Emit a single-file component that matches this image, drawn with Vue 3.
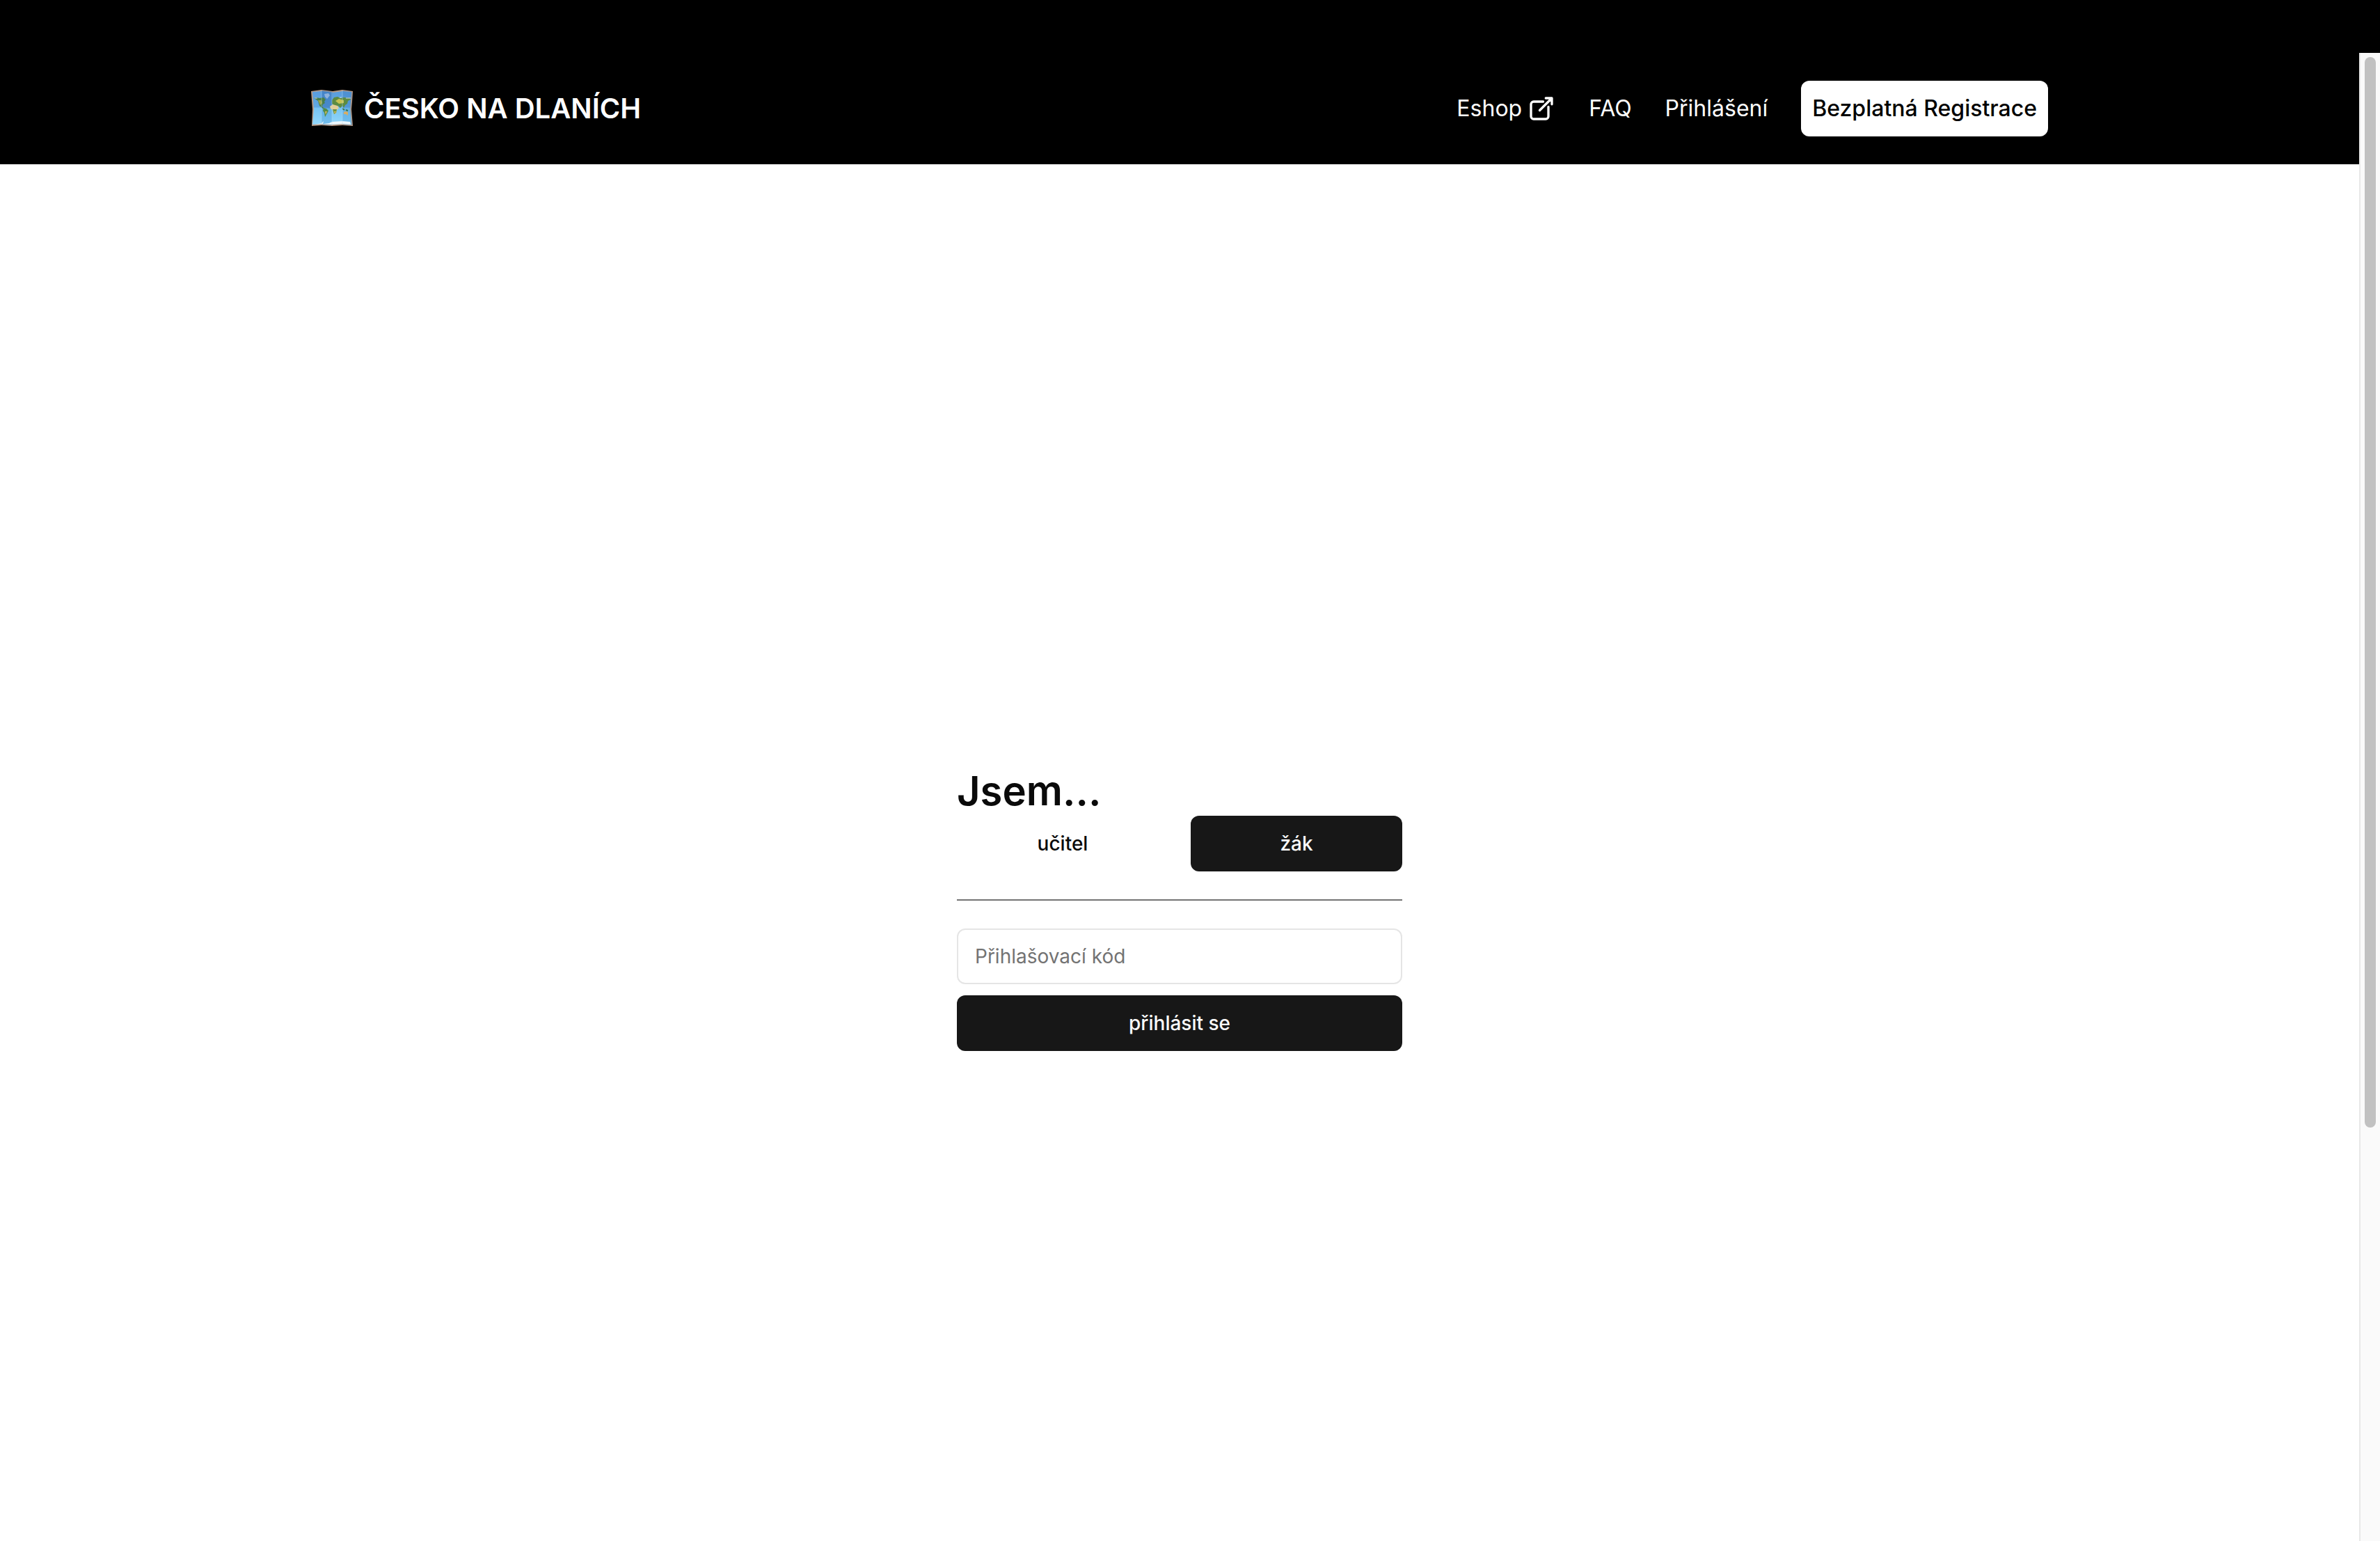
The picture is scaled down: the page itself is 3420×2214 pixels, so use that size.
<script setup>
import { ref } from 'vue'

const roles = ['učitel', 'žák']
const role = ref('žák')
const code = ref('')
</script>

<template>
  <div class="window">
    <div class="titlebar"></div>
    <div class="viewport">
      <div class="page">
        <header class="header">
          <div class="container">
            <a class="brand" href="#">
              <svg class="map" viewBox="0 0 60 60" aria-hidden="true">
                <defs>
                  <linearGradient id="sea" x1="0" y1="0" x2="0" y2="1">
                    <stop offset="0" stop-color="#5a9ddd" />
                    <stop offset="0.48" stop-color="#5fa8e4" />
                    <stop offset="0.5" stop-color="#76c3f3" />
                    <stop offset="1" stop-color="#92d7fa" />
                  </linearGradient>
                </defs>
                <path d="M0 5 15 3 31 5 45 3 60 5 59 20 58 31 60 55 45 54 30 55 15 54 1 55 2 31Z" fill="#b79a86" />
                <path d="M2 6 15 5 31 7 45 5 58 6 57 20 56 31 58 53 45 52 30 53 15 52 2 53 4 31Z" fill="url(#sea)" />
                <path d="M15 4 31 6 30 30 15 29Z" fill="#3a78bd" opacity=".65" />
                <path d="M45 4 59 6 57 30 45 29Z" fill="#3a78bd" opacity=".35" />
                <path d="M15 29 30 30 30 54 15 53ZM45 29 57 30 59 54 45 53Z" fill="#3b8fd0" opacity=".35" />
                <path d="M4 15 8 14 12 15 18 14 21 17 19 20 20 22 17 24 16 27 19 30 17 30 12 26 10 19 7 17Z" fill="#497f4a" />
                <path d="M10 18 15 18 16 22 13 25Z" fill="#9ba54b" />
                <path d="M19 9 25 8 27 11 23 16 20 13Z" fill="#8fb2dc" />
                <path d="M18 29 22 30 25 33 23 37 20 42 19 36 17 33Z" fill="#518c48" />
                <path d="M20 34 23 34 21 39Z" fill="#d0b75c" />
                <path d="M30 18 33 14 38 13 42 15 47 14 56 15 57 17 53 19 52 23 49 25 47 29 45 26 42 29 39 26 35 27 30 23Z" fill="#5c8b43" />
                <path d="M35 19 40 16 47 18 47 22 40 23Z" fill="#c6c251" />
                <path d="M27 27 31 24 38 26 40 29 37 32 36 37 33 38 31 32 28 30Z" fill="#e2cd96" />
                <path d="M31 31 37 31 36 36 33 38Z" fill="#689547" />
                <path d="M33 34 36 34 34 37Z" fill="#e3bf5c" />
                <path d="M45 30 48 32M50 32 53 33" stroke="#39764b" stroke-width="2" />
                <path d="M47 35 50 34 53 35 53 40 50 38 47 38Z" fill="#d9ad63" />
                <path d="M5 15h4M41 14h3M50 15h7" stroke="#c9d6df" stroke-width="1" />
                <path d="M5 53 15 51 18 48 17 52 26 51 30 49 45 48 56 49 57 53 45 52 30 53 15 52Z" fill="#eef7fc" />
                <path d="M15 4V53M30 6V54M45 4V53" stroke="#b9daf1" stroke-width="1" opacity=".45" />
              </svg>
              <span>ČESKO NA DLANÍCH</span>
            </a>
            <nav class="nav">
              <a class="shop" href="#">
                Eshop
                <svg class="external" viewBox="0 0 24 24" fill="none" stroke="currentColor" stroke-width="2" stroke-linecap="round" stroke-linejoin="round" aria-hidden="true">
                  <path d="M13.5 6H5.25A2.25 2.25 0 0 0 3 8.25v10.5A2.25 2.25 0 0 0 5.25 21h10.5A2.25 2.25 0 0 0 18 18.75V10.5M10.5 13.5 21 3m0 0h-5.25M21 3v5.25" />
                </svg>
              </a>
              <a href="#">FAQ</a>
              <a href="#">Přihlášení</a>
              <a class="register" href="#">Bezplatná Registrace</a>
            </nav>
          </div>
        </header>
        <main class="main">
          <form class="login" @submit.prevent>
            <h1>Jsem...</h1>
            <div class="roles">
              <button
                v-for="name in roles"
                :key="name"
                type="button"
                class="button"
                :class="{ solid: role === name }"
                :aria-pressed="role === name"
                @click="role = name"
              >{{ name }}</button>
            </div>
            <hr />
            <div class="fields">
              <input v-model="code" type="text" placeholder="Přihlašovací kód" aria-label="Přihlašovací kód" />
              <button type="submit" class="button solid">přihlásit se</button>
            </div>
          </form>
        </main>
      </div>
      <div class="scrollbar"><div class="thumb"></div></div>
    </div>
  </div>
</template>

<style>
body {
  margin: 0;
}
</style>

<style scoped>
* {
  box-sizing: border-box;
}

.window {
  display: flex;
  flex-direction: column;
  height: 100vh;
  overflow: hidden;
  background: #fff;
  color: #0a0a0a;
  font-family: Inter, "Liberation Sans", sans-serif;
  font-size: 28px;
  line-height: 40px;
}

.titlebar {
  flex: none;
  height: 76px;
  background: #000;
}

.viewport {
  display: flex;
  flex: 1;
  min-height: 0;
}

.page {
  flex: 1;
  min-width: 0;
  overflow: hidden;
}

.header {
  padding: 40px 0;
  background: #000;
  color: #fff;
}

.container {
  display: flex;
  align-items: center;
  justify-content: space-between;
  max-width: 2560px;
  margin: 0 auto;
  padding: 0 32px;
}

a {
  color: inherit;
  text-decoration: none;
}

.brand {
  display: flex;
  align-items: center;
  gap: 16px;
  font-size: 40px;
  font-weight: 600;
  line-height: 56px;
}

.map {
  width: 60px;
  height: 60px;
}

.nav {
  display: flex;
  align-items: center;
  gap: 48px;
  font-size: 32px;
  font-weight: 400;
  line-height: 48px;
}

.shop {
  display: flex;
  align-items: center;
  gap: 8px;
}

.external {
  width: 40px;
  height: 40px;
}

.register {
  padding: 16px;
  border-radius: 12px;
  background: #fff;
  color: #000;
  font-weight: 500;
}

.main {
  display: flex;
  align-items: center;
  justify-content: center;
  height: 100%;
}

.login {
  width: 640px;
}

h1 {
  margin: 0;
  font-size: 58px;
  font-weight: 600;
  line-height: 72px;
}

.roles {
  display: grid;
  grid-template-columns: 1fr 1fr;
  gap: 32px;
}

.button {
  height: 80px;
  border: 0;
  border-radius: 12px;
  background: transparent;
  color: inherit;
  font: inherit;
  font-weight: 500;
}

.solid {
  background: #171717;
  color: #fafafa;
}

hr {
  height: 2px;
  margin: 40px 0;
  border: 0;
  background: #737373;
}

.fields {
  display: flex;
  flex-direction: column;
  gap: 16px;
}

input {
  width: 100%;
  height: 80px;
  padding: 0 24px;
  border: 2px solid #e5e5e5;
  border-radius: 12px;
  background: #fff;
  color: inherit;
  font: inherit;
}

input::placeholder {
  color: #737373;
  opacity: 1;
}

.scrollbar {
  flex: none;
  width: 30px;
  padding: 6px;
  border-left: 2px solid #e8e8e8;
  background: #fafafa;
}

.thumb {
  width: 16px;
  height: 1538px;
  max-height: 100%;
  margin: 0 auto;
  border-radius: 8px;
  background: #c1c1c1;
}
</style>
